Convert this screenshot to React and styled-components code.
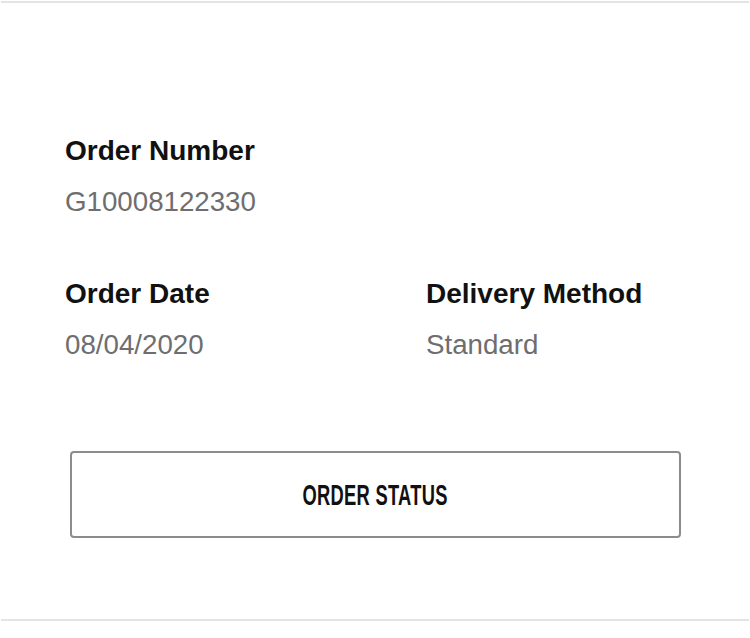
import React from "react";
import styled, { createGlobalStyle } from "styled-components";

const Global = createGlobalStyle`
  html, body { margin: 0; padding: 0; background: #ffffff; }
  body { font-family: "Liberation Sans", Arial, sans-serif; }
`;

const Card = styled.section`
  margin: 1px 1px 0;
  border-top: 2px solid #e4e4e4;
  border-bottom: 2px solid #e4e4e4;
  padding: 132px 0 81px;
`;

const Details = styled.dl`
  margin: 0 0 90px 64px;
  display: grid;
  grid-template-columns: 361px 1fr;
  row-gap: 60px;
`;

const Field = styled.div`
  grid-column: ${(p) => (p.$col ? p.$col : "auto")};
`;

const Label = styled.dt`
  margin: 0 0 19px;
  font-size: 28px;
  line-height: 32px;
  font-weight: 700;
  color: #111111;
`;

const Value = styled.dd`
  margin: 0;
  font-size: 27.7px;
  line-height: 32px;
  font-weight: 400;
  color: #6e6e6e;
`;

const StatusButton = styled.button`
  display: flex;
  align-items: center;
  justify-content: center;
  box-sizing: border-box;
  margin-left: 69px;
  width: 611px;
  height: 87px;
  padding: 0;
  background: #ffffff;
  border: 2px solid #8c8c8c;
  border-radius: 4px;
  cursor: pointer;
`;

const ButtonText = styled.span`
  display: inline-block;
  font-family: "Liberation Sans", Arial, sans-serif;
  font-weight: 700;
  font-size: 30px;
  letter-spacing: 0.5px;
  color: #111111;
  transform: scaleX(0.61);
`;

export default function App() {
  return (
    <>
      <Global />
      <Card>
        <Details>
          <Field $col="1">
            <Label>Order Number</Label>
            <Value>G10008122330</Value>
          </Field>
          <Field $col="1">
            <Label>Order Date</Label>
            <Value>08/04/2020</Value>
          </Field>
          <Field $col="2">
            <Label>Delivery Method</Label>
            <Value>Standard</Value>
          </Field>
        </Details>
        <StatusButton>
          <ButtonText>ORDER STATUS</ButtonText>
        </StatusButton>
      </Card>
    </>
  );
}
